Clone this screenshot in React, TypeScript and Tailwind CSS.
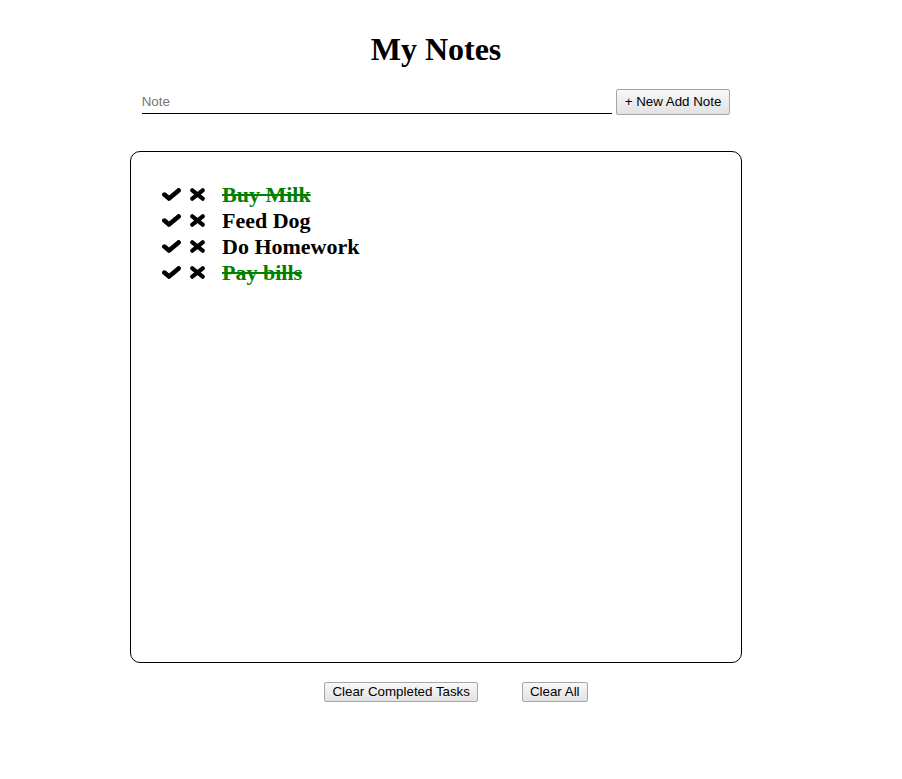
import React from "react";

const notes = [
  { text: "Buy Milk", done: true },
  { text: "Feed Dog", done: false },
  { text: "Do Homework", done: false },
  { text: "Pay bills", done: true },
];

const btn =
  "border border-[#a6a6a6] rounded-[2px] bg-gradient-to-b from-[#f8f8f8] to-[#e2e2e2] text-black text-[13.33px] leading-none font-['Liberation_Sans',Arial,sans-serif]";

function Check() {
  return (
    <svg width="19" height="13" viewBox="0 0 19 13" className="block">
      <polyline
        points="2.4,6.6 7,10.6 16.6,2.4"
        fill="none"
        stroke="black"
        strokeWidth="4.6"
        strokeLinecap="round"
        strokeLinejoin="round"
      />
    </svg>
  );
}

function Cross() {
  return (
    <svg width="15" height="13" viewBox="0 0 15 13" className="block">
      <g stroke="black" strokeWidth="4.2" strokeLinecap="round">
        <line x1="2.3" y1="2.3" x2="12.7" y2="10.7" />
        <line x1="12.7" y1="2.3" x2="2.3" y2="10.7" />
      </g>
    </svg>
  );
}

export default function App() {
  return (
    <div className="w-[872px] bg-white flex flex-col items-center font-['Liberation_Serif','Times_New_Roman',serif] text-black">
      <h1 className="mt-[31px] text-[32px] leading-[37px] font-bold">My Notes</h1>
      <div className="mt-[21px] flex items-center gap-[4px]">
        <input
          placeholder="Note"
          className="w-[470px] h-[24px] border-b border-black outline-none text-[13.33px] font-['Liberation_Sans',Arial,sans-serif] placeholder:text-[#757575] px-0"
        />
        <button className={`${btn} h-[26px] px-[8px]`}>+ New Add Note</button>
      </div>
      <div className="mt-[36px] w-[612px] h-[512px] border border-black rounded-[10px] pt-[30px] pl-[31px]">
        <ul className="flex flex-col">
          {notes.map((n) => (
            <li key={n.text} className="flex items-center h-[26px] text-[22px] font-bold">
              <span className="mt-[-2px]">
                <Check />
              </span>
              <span className="ml-[9px] mt-[-2px]">
                <Cross />
              </span>
              <span
                className={`ml-[17px] leading-[26px] ${n.done ? "text-[#008000] line-through" : "text-black"}`}
              >
                {n.text}
              </span>
            </li>
          ))}
        </ul>
      </div>
      <div className="mt-[19px] pl-[40px] flex gap-[44px]">
        <button className={`${btn} h-[20px] px-[7px]`}>Clear Completed Tasks</button>
        <button className={`${btn} h-[20px] px-[7px]`}>Clear All</button>
      </div>
    </div>
  );
}
